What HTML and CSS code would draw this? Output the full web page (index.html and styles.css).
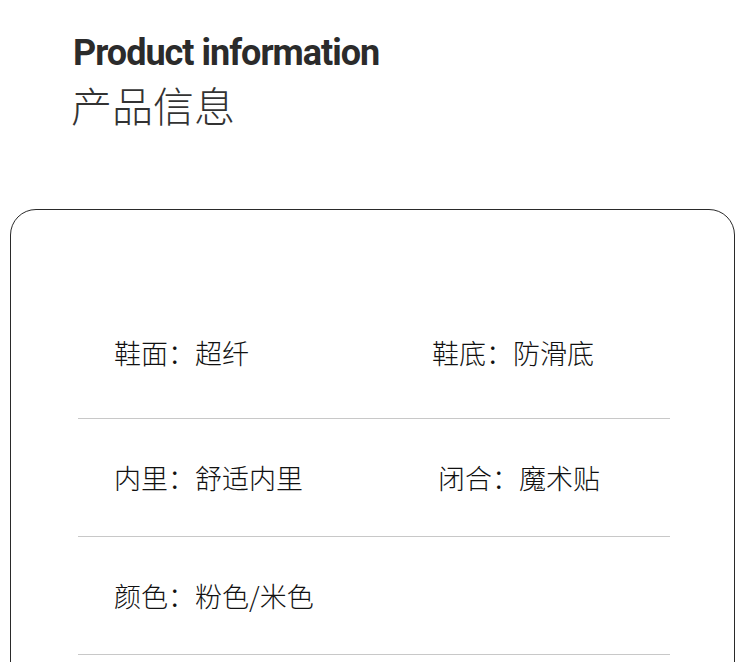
FILE: index.html
```html
<!DOCTYPE html>
<html lang="zh-CN">

<head>
  <meta charset="UTF-8">
  <meta name="viewport" content="width=device-width, initial-scale=1.0">
  <title>Product information</title>
  <link rel="stylesheet" href="styles.css">
</head>

<body>
  <div class="header">
    <h1 class="title-en">Product information</h1>
    <h2 class="title-cn">产品信息</h2>
  </div>

  <div class="card">
    <div class="row">
      <div class="cell">鞋面：超纤</div>
      <div class="cell">鞋底：防滑底</div>
    </div>
    <div class="row">
      <div class="cell">内里：舒适内里</div>
      <div class="cell cell-shift">闭合：魔术贴</div>
    </div>
    <div class="row">
      <div class="cell">颜色：粉色/米色</div>
    </div>
  </div>
</body>

</html>
```

FILE: styles.css
```css
body {
  margin: 0;
  background: #fff;
  font-family: "Noto Sans CJK SC", sans-serif;
  overflow: hidden;
}

.header {
  padding: 33px 0 0 73px;
  height: 209px;
  box-sizing: border-box;
}

.title-en {
  margin: 0;
  font-family: Roboto, sans-serif;
  font-weight: 700;
  font-size: 36px;
  line-height: 40px;
  letter-spacing: -1px;
  color: #2b2b2b;
}

.title-cn {
  margin: 7px 0 0 -2px;
  font-family: "Noto Sans CJK SC", sans-serif;
  font-weight: 300;
  font-size: 41px;
  line-height: 48px;
  color: #333;
}

.card {
  margin: 0 15px 0 10px;
  height: 600px;
  border: 1px solid #2a2a2a;
  border-radius: 26px;
  padding: 91px 64px 0 67px;
}

.row {
  display: grid;
  grid-template-columns: 318px 1fr;
  padding: 45px 0 45px 36px;
  border-bottom: 1px solid #c8c8c8;
}

.row:first-child {
  padding-top: 38px;
  padding-bottom: 52px;
}

.cell {
  font-size: 27px;
  font-weight: 300;
  line-height: 27px;
  color: #111;
}

.cell-shift {
  margin-left: 6px;
}
```
